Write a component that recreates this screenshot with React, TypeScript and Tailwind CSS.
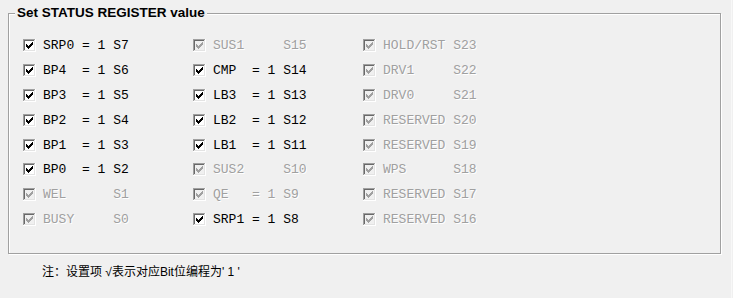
import React from "react";

type Item = { text: string; on: boolean };

const col1: Item[] = [
  { text: "SRP0 = 1 S7", on: true },
  { text: "BP4  = 1 S6", on: true },
  { text: "BP3  = 1 S5", on: true },
  { text: "BP2  = 1 S4", on: true },
  { text: "BP1  = 1 S3", on: true },
  { text: "BP0  = 1 S2", on: true },
  { text: "WEL      S1", on: false },
  { text: "BUSY     S0", on: false },
];
const col2: Item[] = [
  { text: "SUS1     S15", on: false },
  { text: "CMP  = 1 S14", on: true },
  { text: "LB3  = 1 S13", on: true },
  { text: "LB2  = 1 S12", on: true },
  { text: "LB1  = 1 S11", on: true },
  { text: "SUS2     S10", on: false },
  { text: "QE   = 1 S9", on: false },
  { text: "SRP1 = 1 S8", on: true },
];
const col3: Item[] = [
  { text: "HOLD/RST S23", on: false },
  { text: "DRV1     S22", on: false },
  { text: "DRV0     S21", on: false },
  { text: "RESERVED S20", on: false },
  { text: "RESERVED S19", on: false },
  { text: "WPS      S18", on: false },
  { text: "RESERVED S17", on: false },
  { text: "RESERVED S16", on: false },
];

const checkPixels: [number, number][] = [
  [9, 3],
  [8, 4], [9, 4],
  [3, 5], [7, 5], [8, 5], [9, 5],
  [3, 6], [4, 6], [6, 6], [7, 6], [8, 6],
  [3, 7], [4, 7], [5, 7], [6, 7], [7, 7],
  [4, 8], [5, 8], [6, 8],
  [5, 9],
];

function CheckBox({ on }: { on: boolean }) {
  const fill = on ? "#ffffff" : "#f0f0f0";
  const mark = on ? "#000000" : "#a0a0a0";
  return (
    <svg width="13" height="13" viewBox="0 0 13 13" shapeRendering="crispEdges" className="shrink-0">
      <rect x="0" y="0" width="13" height="13" fill="#ffffff" />
      <rect x="0" y="0" width="12" height="1" fill="#a0a0a0" />
      <rect x="0" y="0" width="1" height="12" fill="#a0a0a0" />
      <rect x="1" y="1" width="11" height="11" fill="#e3e3e3" />
      <rect x="1" y="1" width="10" height="1" fill="#696969" />
      <rect x="1" y="1" width="1" height="10" fill="#696969" />
      <rect x="2" y="2" width="9" height="9" fill={fill} />
      {checkPixels.map(([x, y]) => (
        <rect key={`${x}-${y}`} x={x} y={y} width="1" height="1" fill={mark} />
      ))}
    </svg>
  );
}

function Row({ item }: { item: Item }) {
  return (
    <div className="flex h-[13px] items-start gap-[7px]">
      <CheckBox on={item.on} />
      <span
        className={
          item.on
            ? "whitespace-pre text-[13px] leading-[13px] text-black"
            : "whitespace-pre text-[13px] leading-[13px] text-[#a0a0a0] [text-shadow:1px_1px_0_#ffffff]"
        }
        style={{ fontFamily: '"Liberation Mono", "Courier New", monospace' }}
      >
        {item.text}
      </span>
    </div>
  );
}

function Column({ items }: { items: Item[] }) {
  return (
    <div className="flex w-[170px] flex-col gap-y-[11.9px]">
      {items.map((it, i) => (
        <Row key={i} item={it} />
      ))}
    </div>
  );
}

export default function App() {
  return (
    <div className="flex h-[298px] w-[733px] overflow-hidden bg-[#f0f0f0]">
      <div className="w-[731px] pl-[8px] pt-[13px]">
        <div className="relative h-[241px] w-[713px] border border-[#a0a0a0] pl-[14px] pt-[25px] shadow-[1px_1px_0_#ffffff,inset_1px_1px_0_#ffffff]">
          <div
            className="absolute left-[6px] top-[-9px] bg-[#f0f0f0] px-[2px] text-[13.5px] font-bold leading-[16px] text-black"
            style={{ fontFamily: '"Liberation Sans", Arial, sans-serif' }}
          >
            Set STATUS REGISTER value
          </div>
          <div className="flex">
            <Column items={col1} />
            <Column items={col2} />
            <Column items={col3} />
          </div>
        </div>
        <div
          className="mt-[10px] whitespace-pre pl-[34px] text-[12px] leading-[16px] text-black"
          style={{ fontFamily: '"Liberation Sans", "Noto Sans CJK SC", sans-serif' }}
        >
          注：设置项 √表示对应Bit位编程为' 1 '
        </div>
      </div>
      <div className="w-px bg-[#f8f8f8]" />
      <div className="w-px bg-[#f0f0f0]" />
    </div>
  );
}
